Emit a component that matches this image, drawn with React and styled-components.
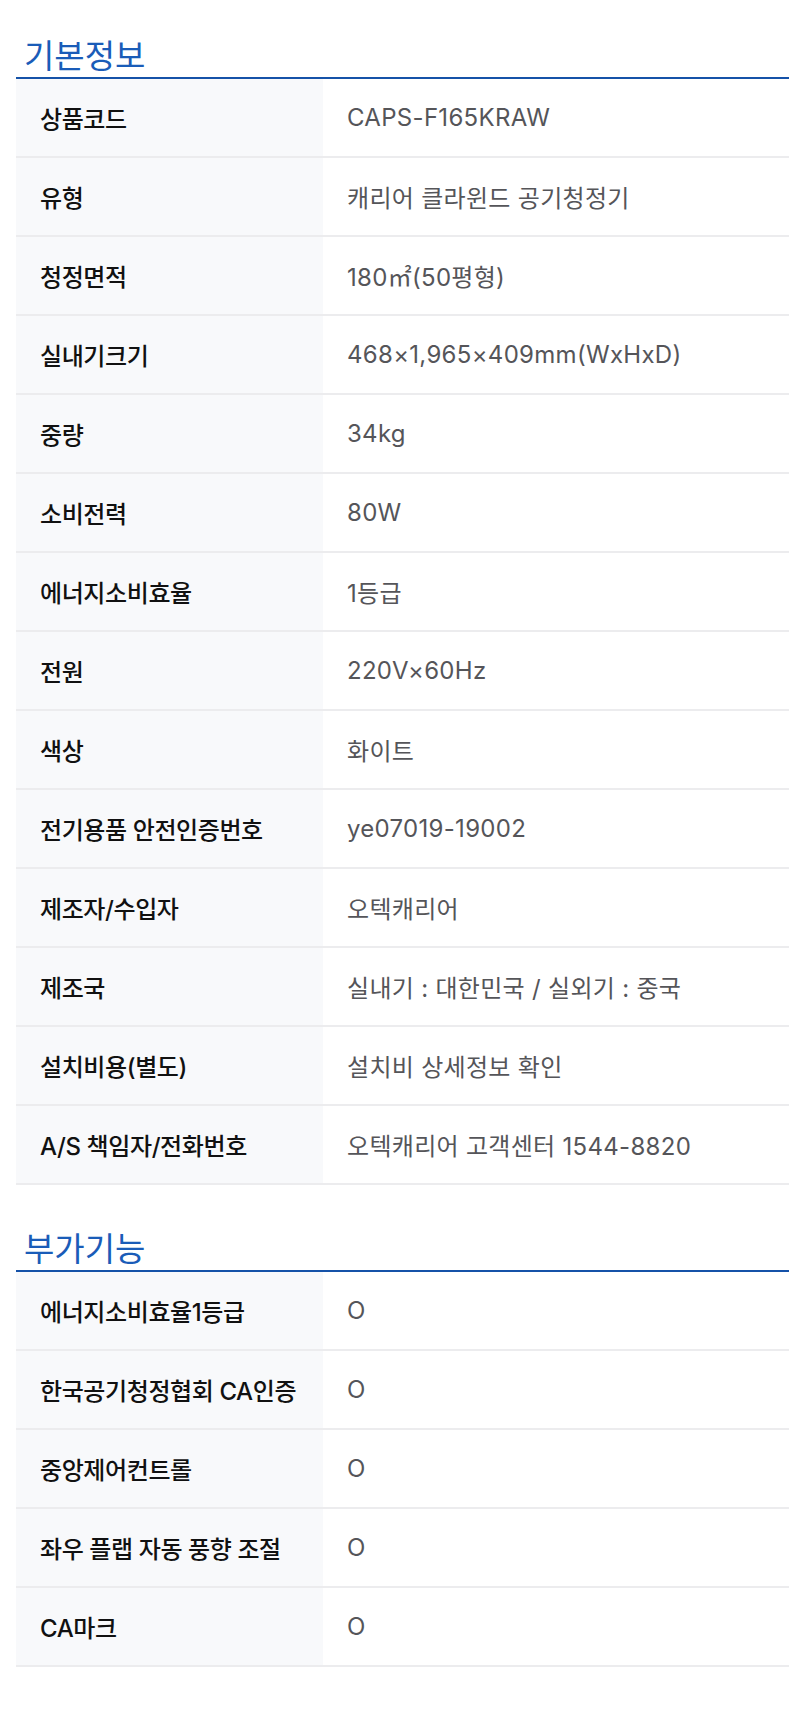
// core
import React from 'react'
// style
import styled, { createGlobalStyle } from 'styled-components'

const GlobalStyle = createGlobalStyle`
  html, body{
    margin: 0;
    padding: 0;
    background: #fff;
  }
  body{
    font-family: Inter, "Noto Sans CJK KR", sans-serif;
    -webkit-font-smoothing: antialiased;
  }
`

const PageContainer = styled.main`
  width: 800px;
  box-sizing: border-box;
  padding: 38px 11px 46px 16px;
`

const Section = styled.section`
  & + &{
    margin-top: 46px;
  }
`

const Title = styled.h2`
  margin: 0;
  padding: 0 0 2px 8px;
  font-size: 33px;
  line-height: 37px;
  font-weight: 400;
  color: #1a5cb8;
  border-bottom: 2px solid #1552a8;
`

const SpecList = styled.dl`
  margin: 0;
`

const Row = styled.div`
  display: grid;
  grid-template-columns: 307px 1fr;
  height: 79px;
  box-sizing: border-box;
  border-bottom: 2px solid #ececee;
`

const Label = styled.dt`
  display: flex;
  align-items: center;
  padding-left: 24px;
  background: #f8f9fb;
  font-size: 24px;
  font-weight: 500;
  color: #111;
  letter-spacing: -0.4px;
`

const Value = styled.dd`
  display: flex;
  align-items: center;
  margin: 0;
  padding-left: 24px;
  font-size: 24px;
  font-weight: 400;
  color: #555559;
  letter-spacing: 0.3px;
`

const basicInfo = [
  ['상품코드', 'CAPS-F165KRAW'],
  ['유형', '캐리어 클라윈드 공기청정기'],
  ['청정면적', '180㎡(50평형)'],
  ['실내기크기', '468×1,965×409mm(WxHxD)'],
  ['중량', '34kg'],
  ['소비전력', '80W'],
  ['에너지소비효율', '1등급'],
  ['전원', '220V×60Hz'],
  ['색상', '화이트'],
  ['전기용품 안전인증번호', 'ye07019-19002'],
  ['제조자/수입자', '오텍캐리어'],
  ['제조국', '실내기 : 대한민국 / 실외기 : 중국'],
  ['설치비용(별도)', '설치비 상세정보 확인'],
  ['A/S 책임자/전화번호', '오텍캐리어 고객센터 1544-8820'],
]

const extraInfo = [
  ['에너지소비효율1등급', 'O'],
  ['한국공기청정협회 CA인증', 'O'],
  ['중앙제어컨트롤', 'O'],
  ['좌우 플랩 자동 풍향 조절', 'O'],
  ['CA마크', 'O'],
]

function SpecSection({ title, rows }){
  return (
    <Section>
      <Title>{title}</Title>
      <SpecList>
        {rows.map(([label, value]) => (
          <Row key={label}>
            <Label>{label}</Label>
            <Value>{value}</Value>
          </Row>
        ))}
      </SpecList>
    </Section>
  )
}

function App() {
  return (
    <>
      <GlobalStyle />
      <PageContainer>
        <SpecSection title='기본정보' rows={basicInfo} />
        <SpecSection title='부가기능' rows={extraInfo} />
      </PageContainer>
    </>
  );
}

export default App
